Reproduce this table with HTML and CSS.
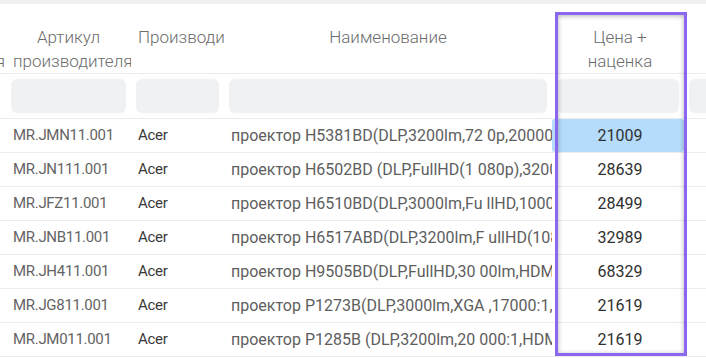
FILE: index.html
```html
<!DOCTYPE html>
<html lang="ru">
<head>
<meta charset="utf-8">
<title>Товары</title>
<link rel="stylesheet" href="styles.css">
</head>
<body>
<div class="screen">
  <div class="topbar"></div>
  <div class="grid">
    <div class="row head">
      <div class="cell c0"><span>категория</span></div>
      <div class="cell">Артикул производителя</div>
      <div class="cell">Производитель</div>
      <div class="cell">Наименование</div>
      <div class="cell">Цена +<br>наценка</div>
      <div class="cell"></div>
    </div>
    <div class="row filter">
      <div class="cell"></div>
      <div class="cell"><div class="box"></div></div>
      <div class="cell"><div class="box"></div></div>
      <div class="cell"><div class="box"></div></div>
      <div class="cell"><div class="box"></div></div>
      <div class="cell"><div class="box wide"></div></div>
    </div>
    <div class="row data">
      <div class="cell"></div>
      <div class="cell art">MR.JMN11.001</div>
      <div class="cell brand">Acer</div>
      <div class="cell name">проектор H5381BD(DLP,3200lm,72 0p,20000:1,HDMI,2.5kg)</div>
      <div class="cell price sel">21009</div>
      <div class="cell"></div>
    </div>
    <div class="row data">
      <div class="cell"></div>
      <div class="cell art">MR.JN111.001</div>
      <div class="cell brand">Acer</div>
      <div class="cell name">проектор H6502BD (DLP,FullHD(1 080p),3200lm,20000:1)</div>
      <div class="cell price">28639</div>
      <div class="cell"></div>
    </div>
    <div class="row data">
      <div class="cell"></div>
      <div class="cell art">MR.JFZ11.001</div>
      <div class="cell brand">Acer</div>
      <div class="cell name">проектор H6510BD(DLP,3000lm,Fu llHD,10000:1,HDMI)</div>
      <div class="cell price">28499</div>
      <div class="cell"></div>
    </div>
    <div class="row data">
      <div class="cell"></div>
      <div class="cell art">MR.JNB11.001</div>
      <div class="cell brand">Acer</div>
      <div class="cell name">проектор H6517ABD(DLP,3200lm,F ullHD(1080p),HDMI)</div>
      <div class="cell price">32989</div>
      <div class="cell"></div>
    </div>
    <div class="row data">
      <div class="cell"></div>
      <div class="cell art">MR.JH411.001</div>
      <div class="cell brand">Acer</div>
      <div class="cell name">проектор H9505BD(DLP,FullHD,30 00lm,HDMI,3D)</div>
      <div class="cell price">68329</div>
      <div class="cell"></div>
    </div>
    <div class="row data">
      <div class="cell"></div>
      <div class="cell art">MR.JG811.001</div>
      <div class="cell brand">Acer</div>
      <div class="cell name">проектор P1273B(DLP,3000lm,XGA ,17000:1,HDMI)</div>
      <div class="cell price">21619</div>
      <div class="cell"></div>
    </div>
    <div class="row data">
      <div class="cell"></div>
      <div class="cell art">MR.JM011.001</div>
      <div class="cell brand">Acer</div>
      <div class="cell name">проектор P1285B (DLP,3200lm,20 000:1,HDMI)</div>
      <div class="cell price">21619</div>
      <div class="cell"></div>
    </div>
  </div>
  <div class="highlight"></div>
</div>
</body>
</html>
```
FILE: styles.css
```css
html, body {
  margin: 0;
  padding: 0;
  background: #ffffff;
}
body {
  font-family: Roboto, "Noto Sans", sans-serif;
  width: 706px;
  height: 358px;
  overflow: hidden;
}
.screen {
  position: relative;
  width: 706px;
  height: 358px;
  overflow: hidden;
}
.topbar {
  height: 4px;
  background: #eff0f2;
}
.row {
  display: grid;
  grid-template-columns: 6px 125px 93px 328px 132px 22px;
  border-bottom: 1px solid #ececec;
  box-sizing: border-box;
}
.cell {
  overflow: hidden;
  box-sizing: border-box;
  min-width: 0;
}
.head {
  height: 70px;
}
.head .cell {
  padding: 21px 7px 0;
  font-weight: 300;
  font-size: 17px;
  line-height: 24px;
  color: #6c6c6c;
  text-align: center;
}
.head .cell:nth-child(5) {
  padding-left: 10px;
  padding-right: 6px;
}
.head .c0 {
  display: flex;
  justify-content: flex-end;
  align-items: flex-start;
  padding: 45px 1px 0 0;
  white-space: nowrap;
}
.head .c0 span {
  flex: none;
}
.filter {
  height: 45px;
}
.filter .cell {
  padding: 5px 5px 0;
}
.box {
  height: 34px;
  background: #f0f1f3;
  border-radius: 6px;
}
.box.wide {
  width: 40px;
}
.data {
  height: 34px;
}
.data .cell {
  padding: 0 7px;
  line-height: 33px;
  font-size: 15px;
  letter-spacing: -0.3px;
  white-space: nowrap;
}
.art {
  color: #646464;
}
.brand {
  color: #3a3a3a;
}
.data .name {
  color: #5e5e5e;
  font-size: 16px;
  letter-spacing: 0;
}
.data .price {
  text-align: center;
  color: #303030;
  font-size: 16px;
  letter-spacing: 0;
  padding-left: 9px;
  padding-right: 5px;
}
.sel {
  background: #b5dcfb;
  border-radius: 3px;
}
.highlight {
  position: absolute;
  left: 555px;
  top: 12px;
  width: 132px;
  height: 344px;
  box-sizing: border-box;
  border: 3px solid #8b66ee;
  box-shadow: inset 0 1px 5px rgba(0, 0, 0, 0.3);
  pointer-events: none;
}
```
